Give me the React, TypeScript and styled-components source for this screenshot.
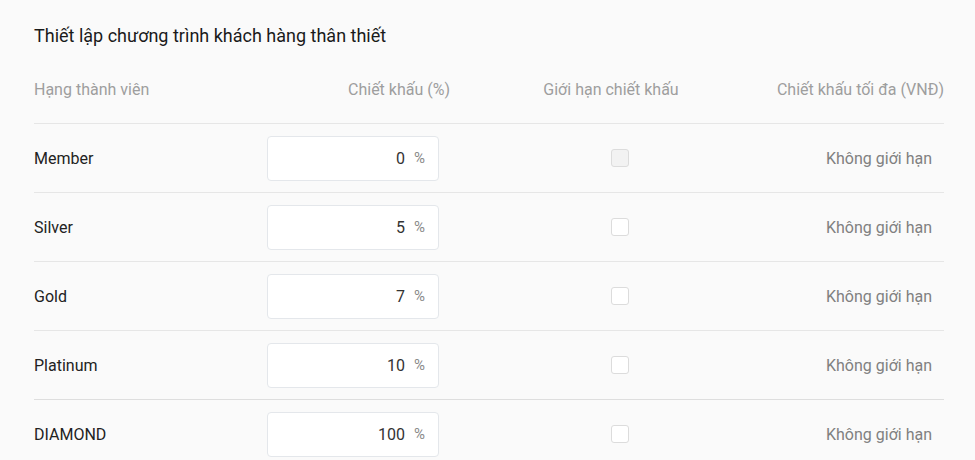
import React from "react";
import styled, { createGlobalStyle } from "styled-components";

const Global = createGlobalStyle`
  html, body { margin: 0; padding: 0; background: #fafafa; }
  body { font-family: Roboto, "Noto Sans", Arial, sans-serif; }
  * { box-sizing: border-box; }
`;

const Page = styled.div`
  width: 975px;
  height: 460px;
  overflow: hidden;
  background: #fafafa;
  padding: 24px 31px 0 34px;
`;

const Title = styled.h2`
  margin: 0;
  font-size: 18px;
  line-height: 24px;
  font-weight: 400;
  color: #1a1a1a;
`;

const Grid = styled.div`
  display: grid;
  grid-template-columns: 226px 190px 1fr 200px;
`;

const HeadCell = styled.div<{ $align: "left" | "right" | "center"; $pl?: number }>`
  padding: 30px 0 21px ${(p) => p.$pl ?? 0}px;
  line-height: 24px;
  font-size: 16px;
  color: #9e9e9e;
  text-align: ${(p) => p.$align};
  white-space: nowrap;
  border-bottom: 1px solid #e6e6e6;
`;

const Cell = styled.div<{ $justify: string; $last?: boolean }>`
  height: 69px;
  display: flex;
  align-items: center;
  justify-content: ${(p) => p.$justify};
  border-bottom: 1px solid ${(p) => (p.$last ? "#dedede" : "#e6e6e6")};
`;

const TierName = styled.span`
  font-size: 16px;
  color: #222;
`;

const InputBox = styled.div`
  width: 172px;
  height: 45px;
  margin-left: 7px;
  background: #fff;
  border: 1px solid #e4e7eb;
  border-radius: 4px;
  display: flex;
  align-items: center;
  justify-content: flex-end;
  padding-right: 13px;
`;

const Value = styled.span`
  font-size: 16px;
  color: #333;
`;

const Unit = styled.span`
  font-size: 15px;
  color: #8a8a8a;
  margin-left: 9px;
`;

const Check = styled.span<{ $disabled?: boolean }>`
  width: 18px;
  height: 18px;
  margin-left: 46px;
  border: 1px solid #dcdcdc;
  border-radius: 3px;
  background: ${(p) => (p.$disabled ? "#f2f2f2" : "#fff")};
`;

const Limit = styled.span`
  font-size: 16px;
  color: #808080;
  padding-right: 12px;
`;

const rows = [
  { name: "Member", value: 0, disabled: true },
  { name: "Silver", value: 5 },
  { name: "Gold", value: 7 },
  { name: "Platinum", value: 10 },
  { name: "DIAMOND", value: 100 },
];

export default function App() {
  return (
    <Page>
      <Global />
      <Title>Thiết lập chương trình khách hàng thân thiết</Title>
      <Grid>
        <HeadCell $align="left">Hạng thành viên</HeadCell>
        <HeadCell $align="right">Chiết khấu (%)</HeadCell>
        <HeadCell $align="center" $pl={28}>Giới hạn chiết khấu</HeadCell>
        <HeadCell $align="right">Chiết khấu tối đa (VNĐ)</HeadCell>
        {rows.map((r, i) => {
          const last = i === rows.length - 2;
          return (
            <React.Fragment key={r.name}>
              <Cell $justify="flex-start" $last={last}>
                <TierName>{r.name}</TierName>
              </Cell>
              <Cell $justify="flex-start" $last={last}>
                <InputBox>
                  <Value>{r.value}</Value>
                  <Unit>%</Unit>
                </InputBox>
              </Cell>
              <Cell $justify="center" $last={last}>
                <Check $disabled={r.disabled} />
              </Cell>
              <Cell $justify="flex-end" $last={last}>
                <Limit>Không giới hạn</Limit>
              </Cell>
            </React.Fragment>
          );
        })}
      </Grid>
    </Page>
  );
}
